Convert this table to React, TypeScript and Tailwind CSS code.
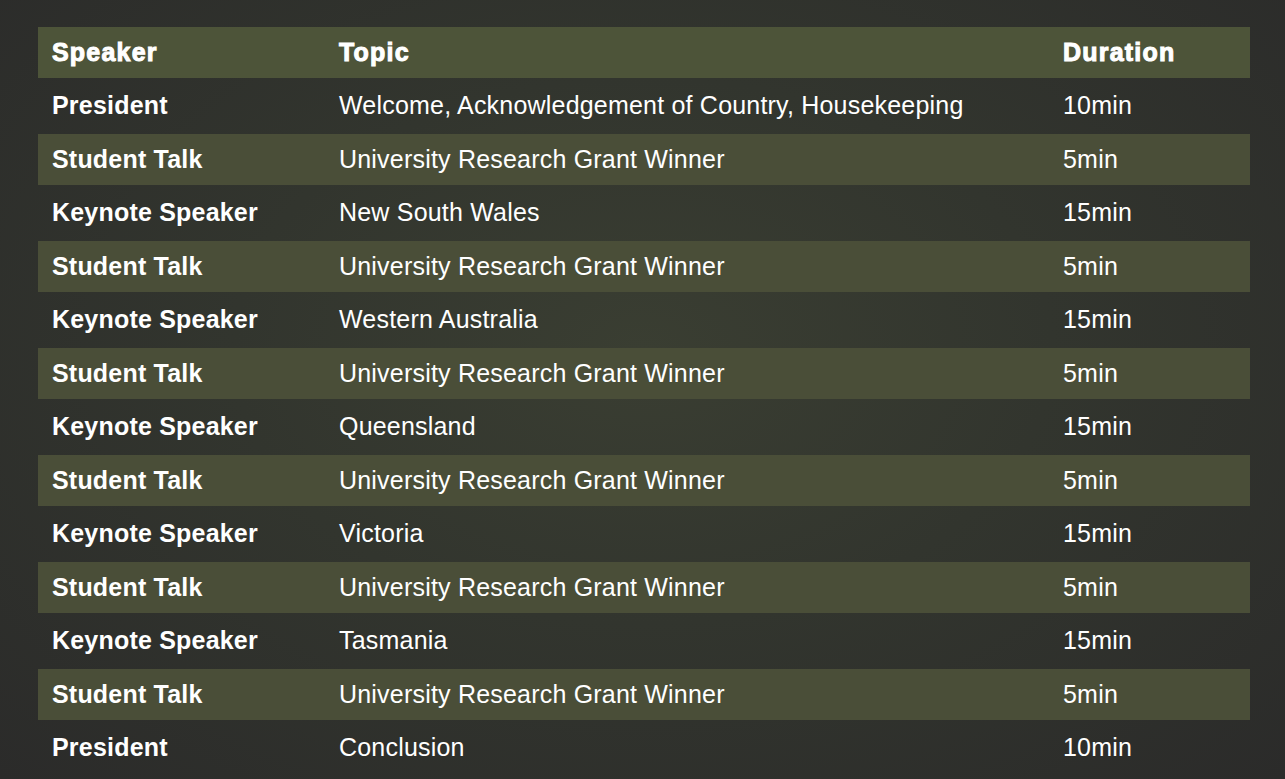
const rows: [string, string, string][] = [
  ["President", "Welcome, Acknowledgement of Country, Housekeeping", "10min"],
  ["Student Talk", "University Research Grant Winner", "5min"],
  ["Keynote Speaker", "New South Wales", "15min"],
  ["Student Talk", "University Research Grant Winner", "5min"],
  ["Keynote Speaker", "Western Australia", "15min"],
  ["Student Talk", "University Research Grant Winner", "5min"],
  ["Keynote Speaker", "Queensland", "15min"],
  ["Student Talk", "University Research Grant Winner", "5min"],
  ["Keynote Speaker", "Victoria", "15min"],
  ["Student Talk", "University Research Grant Winner", "5min"],
  ["Keynote Speaker", "Tasmania", "15min"],
  ["Student Talk", "University Research Grant Winner", "5min"],
  ["President", "Conclusion", "10min"],
];

export default function App() {
  return (
    <div
      className="w-[1285px] h-[779px] overflow-hidden text-white bg-[#2c2c2a] bg-[radial-gradient(ellipse_at_50%_45%,#3a3e32_0%,#32352e_45%,#2b2b2a_100%)] pt-[27px] pl-[38px]"
      style={{ fontFamily: '"Liberation Sans", Arial, sans-serif' }}
    >
      <div className="w-[1212px] flex flex-col gap-[2.5px]">
        {/* header */}
        <div className="h-[51px] flex items-center bg-[#4d5439] text-[25px] font-black tracking-[1.2px] [-webkit-text-stroke:1px_white]">
          <div className="w-[301px] pl-[14px]">Speaker</div>
          <div className="w-[724px]">Topic</div>
          <div className="flex-1">Duration</div>
        </div>

        {rows.map(([speaker, topic, dur], i) => (
          <div
            key={i}
            className={`h-[51px] flex items-center text-[25px] tracking-[0.2px] ${i % 2 === 1 ? "bg-[#4a4e38]" : ""}`}
          >
            <div className="w-[301px] pl-[14px] font-bold">{speaker}</div>
            <div className="w-[724px]">{topic}</div>
            <div className="flex-1">{dur}</div>
          </div>
        ))}
      </div>
    </div>
  );
}
